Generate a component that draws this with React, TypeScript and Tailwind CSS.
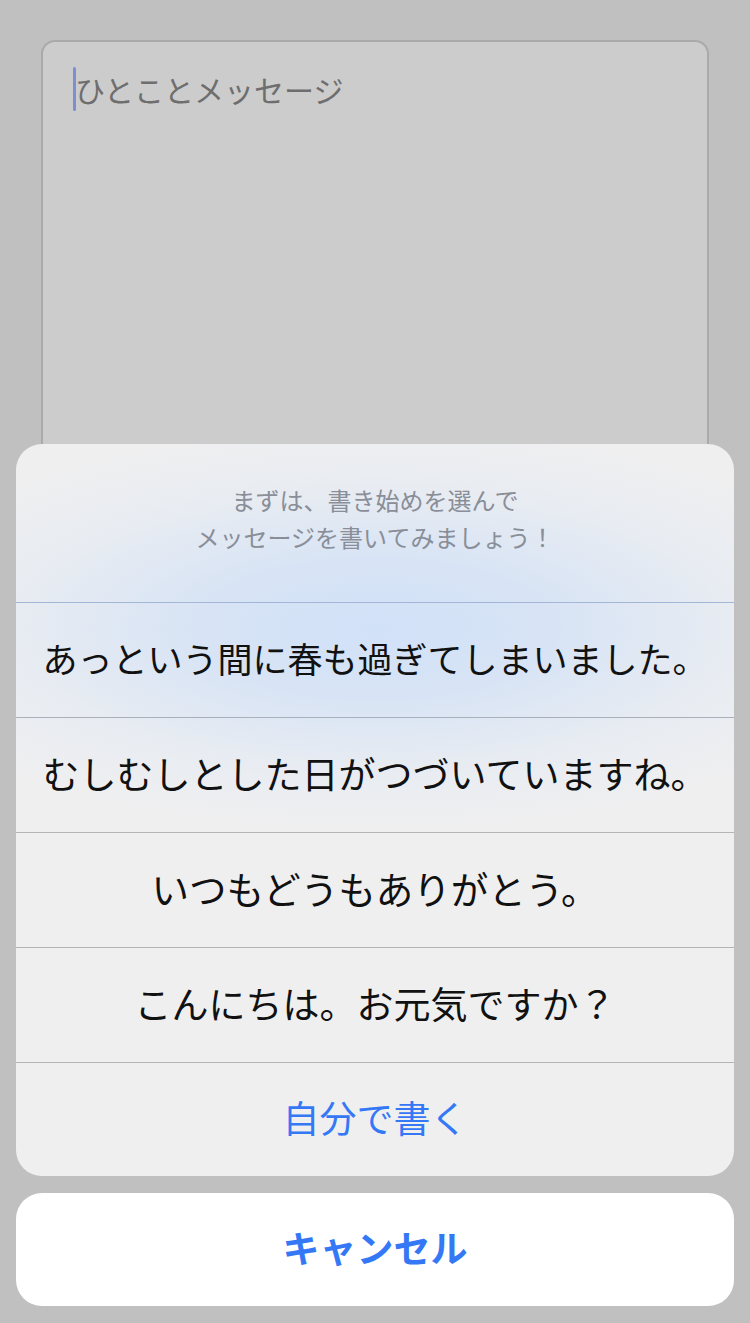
const options = [
  { text: 'あっという間に春も過ぎてしまいました。', size: 'text-[35px]' },
  { text: 'むしむしとした日がつづいていますね。', size: 'text-[37px]' },
  { text: 'いつもどうもありがとう。', size: 'text-[37.5px]' },
  { text: 'こんにちは。お元気ですか？', size: 'text-[37px]' },
];

function App() {
  return (
    <div
      className="relative h-[1323px] w-[750px] overflow-hidden bg-[#c0c0c0]"
      style={{ fontFamily: '"Noto Sans CJK JP", "Noto Sans", sans-serif' }}
    >
      {/* message box behind the sheet */}
      <div className="mx-[41px] mt-[40px] h-[640px] rounded-[14px] border-2 border-[#aaaaaa] bg-[#cccccc]">
        <div className="flex items-center pl-[30px] pt-[25px]">
          <span className="h-[44px] w-[3px] rounded-full bg-[#7d8ed2]" />
          <span className="-ml-[1px] text-[30px] leading-[44px] text-[#6e6e6e]">ひとことメッセージ</span>
        </div>
      </div>

      {/* action sheet */}
      <div className="absolute bottom-[17px] left-[16px] right-[16px] flex flex-col gap-[17px]">
        <div className="overflow-hidden rounded-[26px] bg-[radial-gradient(ellipse_520px_200px_at_50%_185px,#d1e1f8_0%,#d8e4f5_35%,#e8ecf2_70%,#efeff0_100%)]">
          <div className="flex h-[158px] flex-col items-center justify-center pb-[10px] text-center text-[24px] leading-[37px] text-[#898e98]">
            <div>まずは、書き始めを選んで</div>
            <div>メッセージを書いてみましょう！</div>
          </div>
          {options.map((o, i) => (
            <div key={o.text}>
              <div className={`h-px ${i === 0 ? 'bg-[#a3b6d6]' : i === 1 ? 'bg-[#a9b0bc]' : 'bg-[#b2b4b8]'}`} />
              <div className={`flex h-[114px] items-center justify-center pb-[3px] ${o.size} text-[#111111]`}>
                {o.text}
              </div>
            </div>
          ))}
          <div className="h-px bg-[#b4b4b4]" />
          <div className="flex h-[113px] items-center justify-center pb-[3px] text-[37px] text-[#3478f6]">
            自分で書く
          </div>
        </div>
        <div className="flex h-[113px] items-center justify-center rounded-[26px] bg-white pb-[3px] text-[37px] font-bold text-[#3478f6]">
          キャンセル
        </div>
      </div>
    </div>
  );
}

export default App;
